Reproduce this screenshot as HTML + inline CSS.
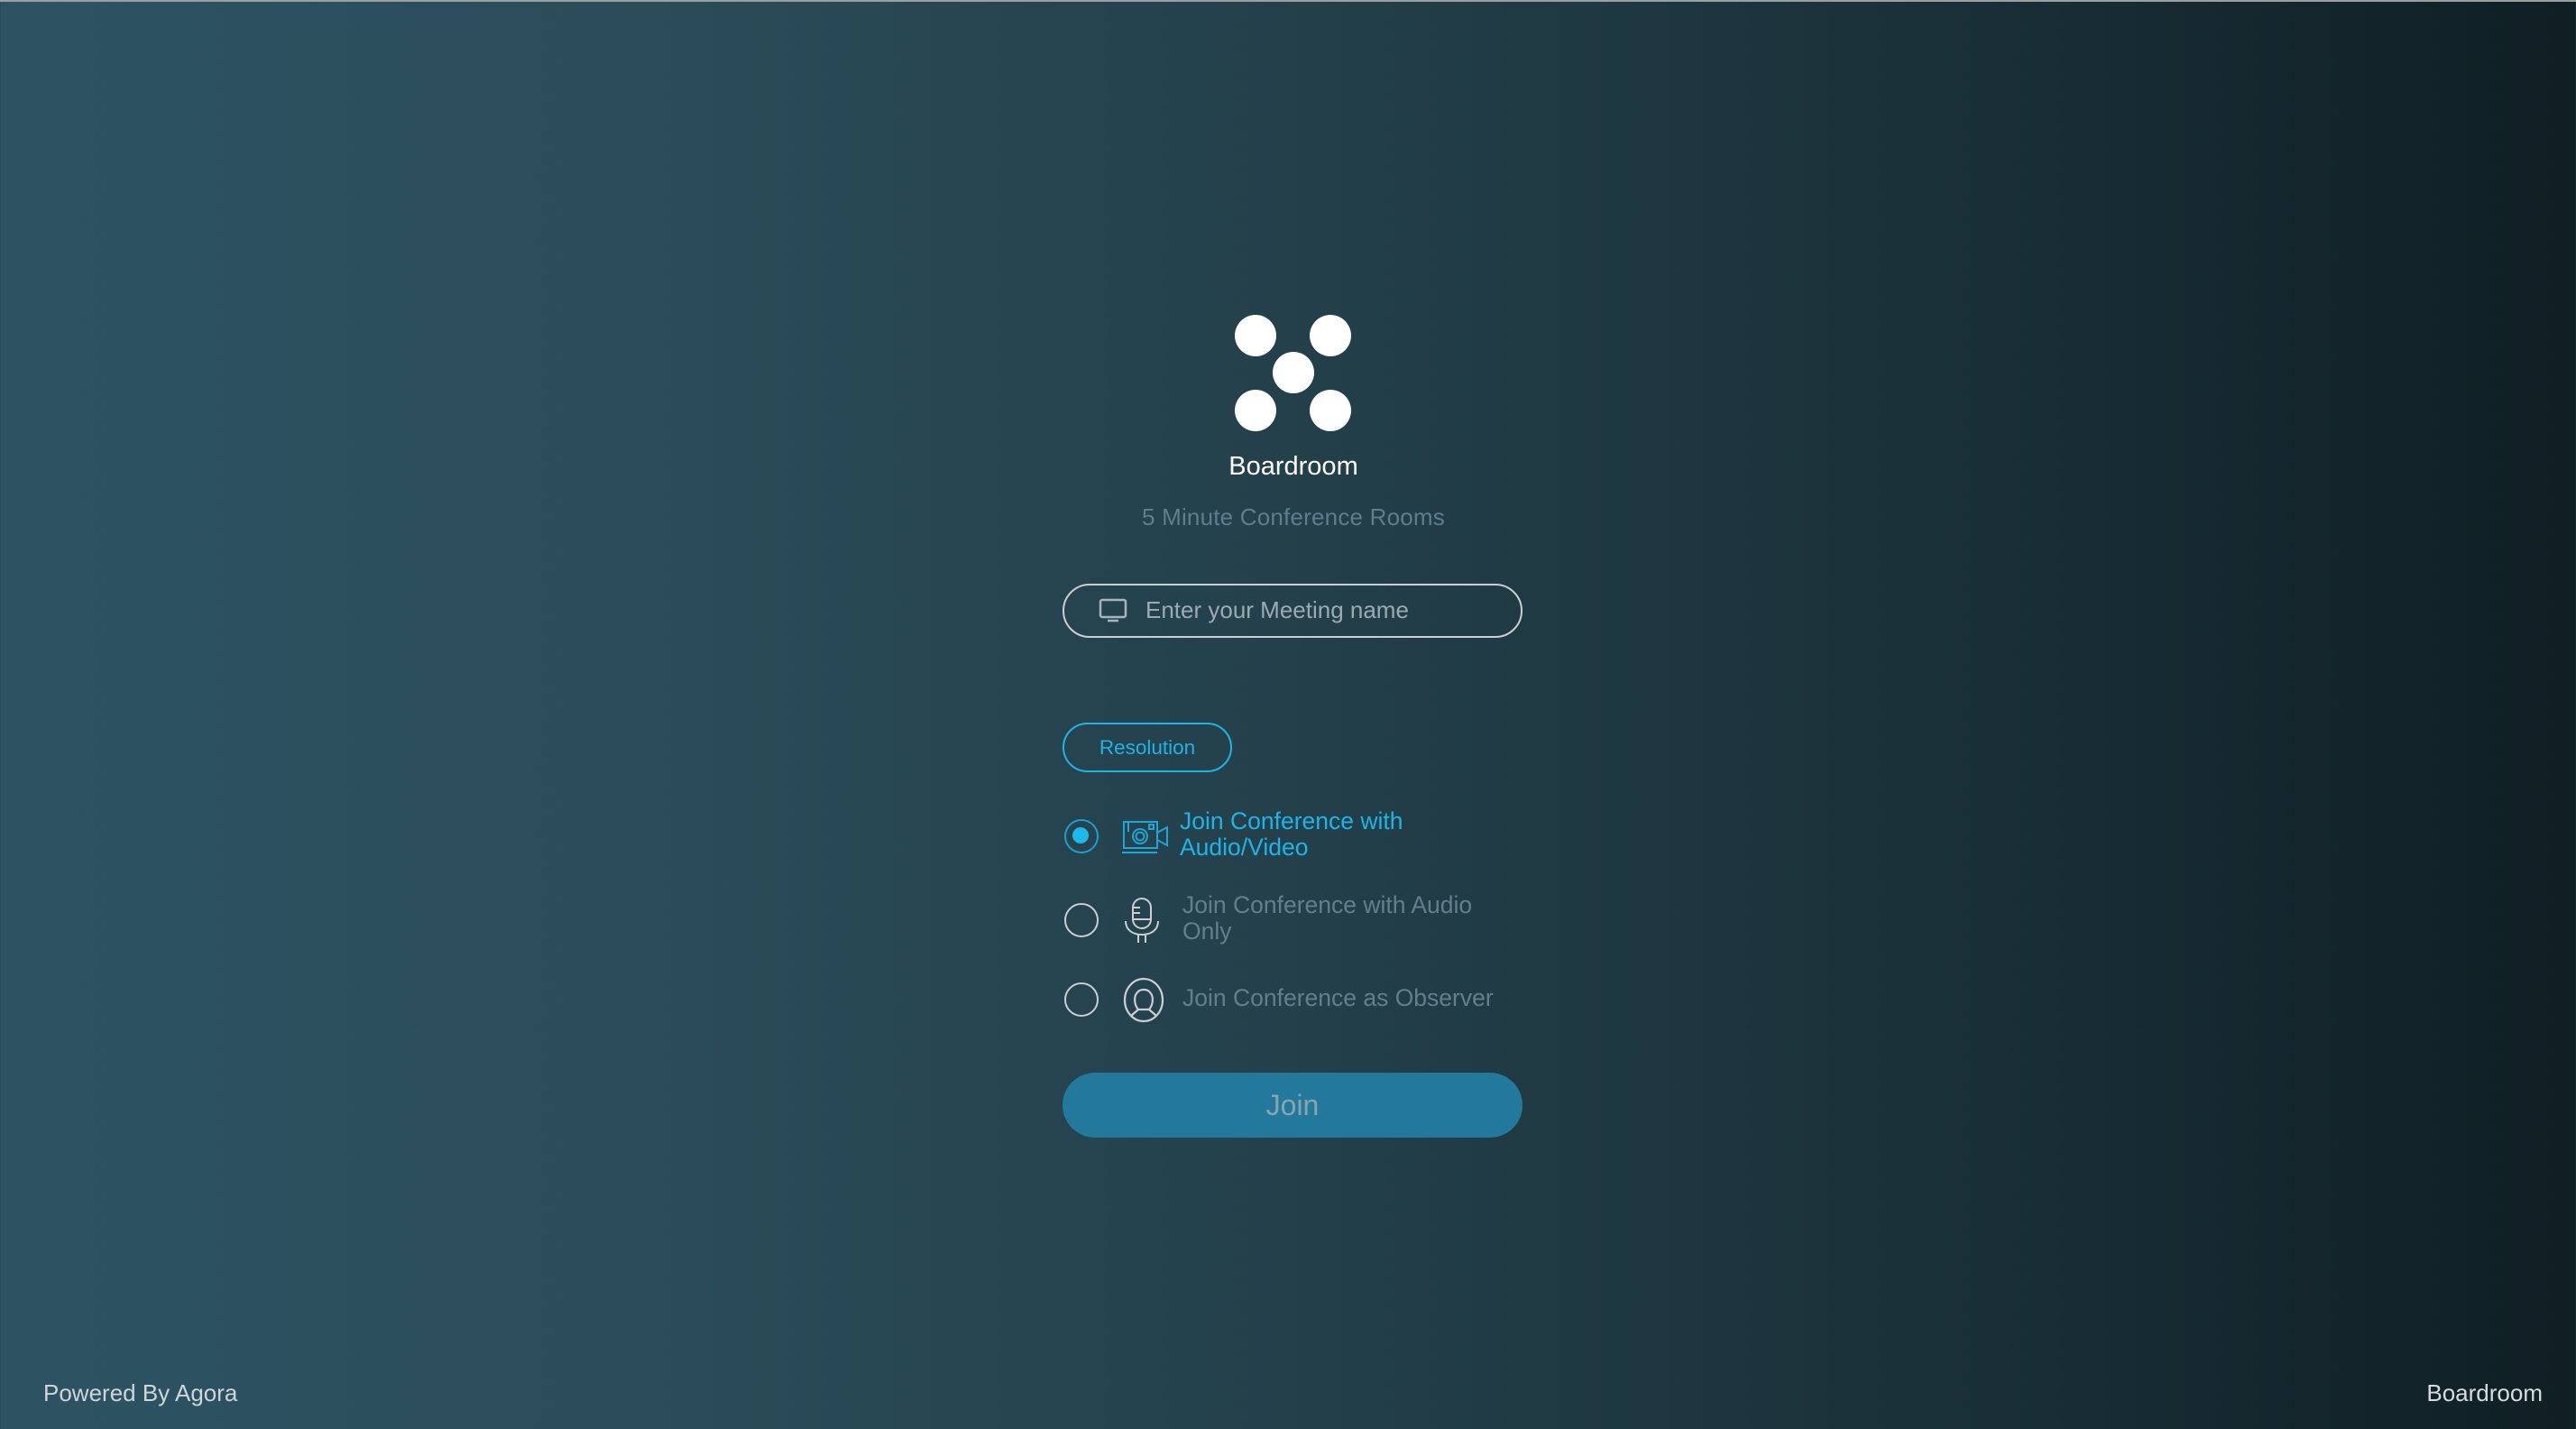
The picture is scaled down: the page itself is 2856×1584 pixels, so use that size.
<!DOCTYPE html>
<html><head><meta charset="utf-8"><style>
html,body{margin:0;padding:0}
body{width:2856px;height:1584px;position:relative;overflow:hidden;font-family:"Liberation Sans",sans-serif;
background:linear-gradient(to right,#2d5363 0%,#2b4c59 25%,#23404b 50%,#1a3038 75%,#0f1f24 100%);}
.top{position:absolute;left:0;top:0;width:100%;height:2px;background:#9a9fa2}
.dot{position:absolute;width:46px;height:46px;border-radius:50%;background:#fff}
.t{position:absolute;white-space:nowrap}
</style></head><body>
<div class="top"></div>
<div class="dot" style="left:1369px;top:349px"></div>
<div class="dot" style="left:1452px;top:349px"></div>
<div class="dot" style="left:1411px;top:390px"></div>
<div class="dot" style="left:1369px;top:432px"></div>
<div class="dot" style="left:1452px;top:432px"></div>
<div class="t" style="left:0;width:2868px;text-align:center;top:501px;font-size:29px;color:#fff">Boardroom</div>
<div class="t" style="left:0;width:2868px;text-align:center;top:558px;font-size:26px;color:#5f7d8b;letter-spacing:0.2px">5 Minute Conference Rooms</div>
<div style="position:absolute;left:1178px;top:647px;width:506px;height:56px;border:2px solid #c9cfd2;border-radius:31px"></div>
<svg style="position:absolute;left:1218px;top:662px" width="32" height="30" viewBox="0 0 32 30"><rect x="2" y="3" width="28" height="19" rx="2" fill="none" stroke="#a8b4ba" stroke-width="2.5"/><path d="M10 26h12" stroke="#a8b4ba" stroke-width="2.5"/></svg>
<div class="t" style="left:1270px;top:661px;font-size:26px;color:#9aabb3">Enter your Meeting name</div>
<div style="position:absolute;left:1178px;top:801px;width:184px;height:51px;border:2px solid #1fb4e6;border-radius:28px;color:#1fb4e6;font-size:22.5px;line-height:51px;text-align:center">Resolution</div>
<div style="position:absolute;left:1180px;top:908px;width:34px;height:34px;border:2px solid #1c9fcb;border-radius:50%"></div>
<div style="position:absolute;left:1189px;top:917px;width:18px;height:18px;background:#1fb8ec;border-radius:50%"></div>
<svg style="position:absolute;left:1244px;top:908px" width="52" height="40" viewBox="0 0 52 40"><g fill="none" stroke="#1fa5d6" stroke-width="2"><rect x="2" y="3" width="37" height="29"/><path d="M0 37h39"/><circle cx="20" cy="19" r="8"/><circle cx="20" cy="19" r="4.5"/><rect x="30" y="6" width="5" height="5"/><path d="M7 3v11M39 15l11-6v20l-11-6"/></g></svg>
<div class="t" style="left:1308px;top:896px;font-size:26.5px;line-height:29px;color:#1fb4e6">Join Conference with<br>Audio/Video</div>
<div style="position:absolute;left:1180px;top:1001px;width:34px;height:34px;border:2px solid #c9cfd2;border-radius:50%"></div>
<svg style="position:absolute;left:1246px;top:994px" width="40" height="52" viewBox="0 0 40 52"><g fill="none" stroke="#c9cfd2" stroke-width="2"><rect x="10" y="2" width="20" height="33" rx="10"/><path d="M10 12h8M10 18h8M10 25h20M2 27c0 10 8 15 18 15s18-5 18-15M16 42v9M24 42v9"/></g></svg>
<div class="t" style="left:1311px;top:989px;font-size:26.5px;line-height:29px;color:#647f8c">Join Conference with Audio<br>Only</div>
<div style="position:absolute;left:1180px;top:1089px;width:34px;height:34px;border:2px solid #c9cfd2;border-radius:50%"></div>
<svg style="position:absolute;left:1245px;top:1083px" width="46" height="51" viewBox="0 0 46 51"><g fill="none" stroke="#c9cfd2" stroke-width="2.2"><ellipse cx="23" cy="25.5" rx="21" ry="23.5"/><path d="M17 36c-5-6-5-15-1-19 3-4 11-4 14 0 4 4 4 13-1 19M17 36l-8 7M29 36l8 7M17 36h12"/></g></svg>
<div class="t" style="left:1311px;top:1092px;font-size:26.5px;line-height:29px;color:#647f8c">Join Conference as Observer</div>
<div style="position:absolute;left:1178px;top:1189px;width:510px;height:72px;background:#22799b;border-radius:36px;color:#8aa4af;font-size:32px;line-height:72px;text-align:center">Join</div>
<div class="t" style="left:48px;top:1529px;font-size:26px;color:#cdd6da">Powered By Agora</div>
<div class="t" style="right:37px;top:1529px;font-size:26px;color:#d6dcdf">Boardroom</div>
</body></html>
